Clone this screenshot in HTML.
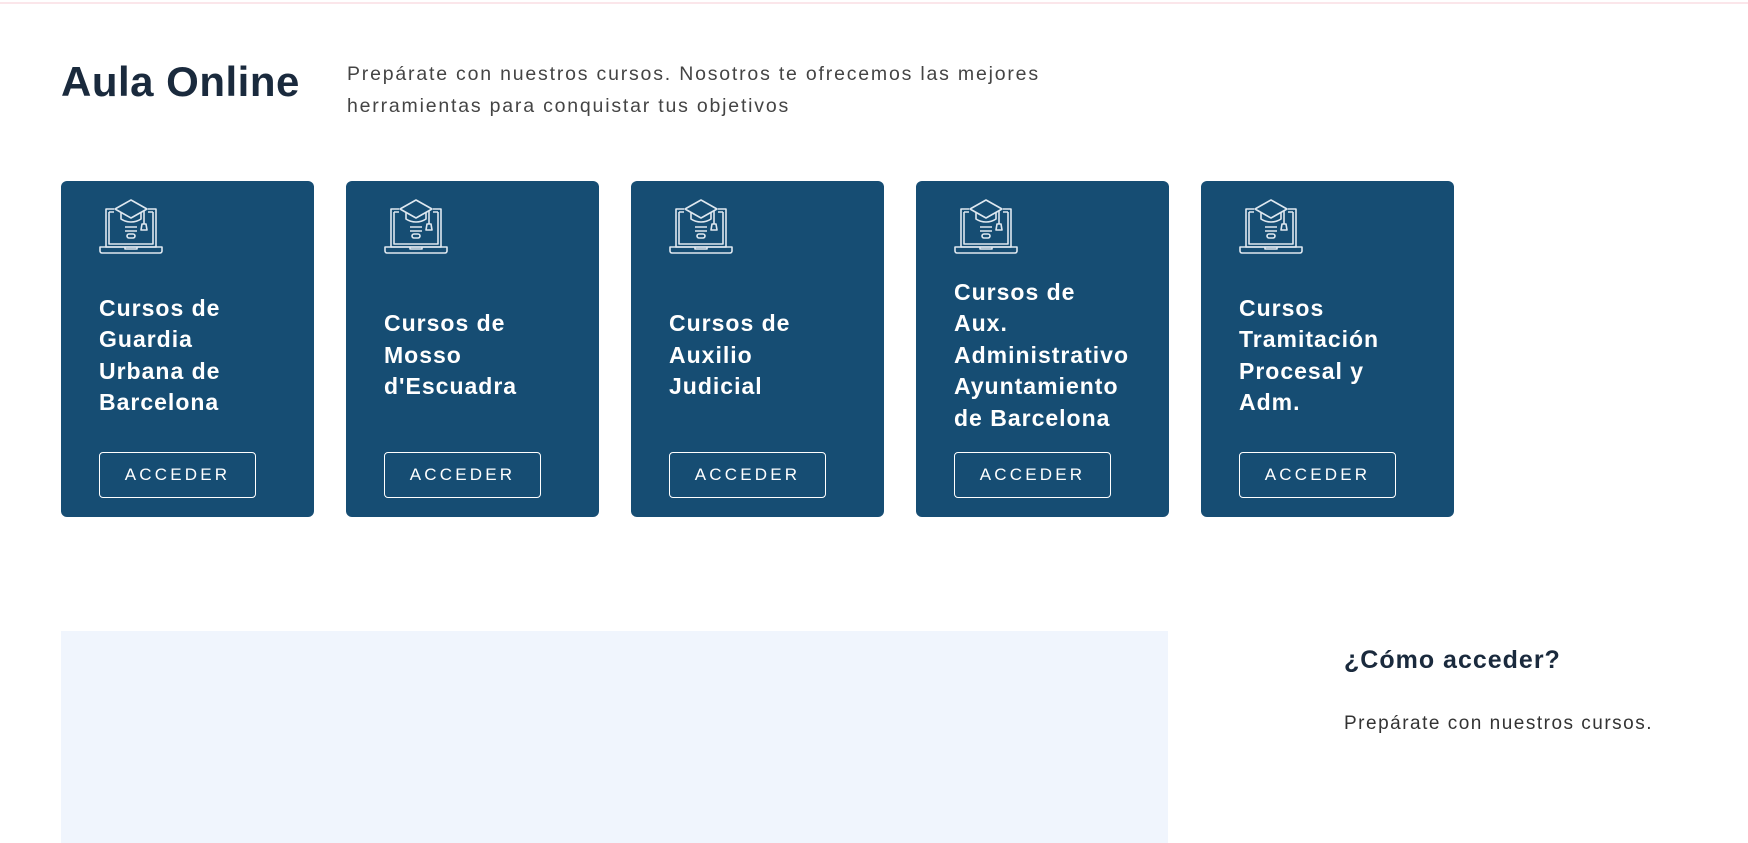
<!DOCTYPE html>
<html><head><meta charset="utf-8"><style>
*{box-sizing:border-box;margin:0;padding:0}
html,body{width:1748px;height:843px;overflow:hidden;background:#fff;font-family:"Liberation Sans",sans-serif}
.top{position:absolute;top:0;left:0;right:0;height:4px;border-bottom:2px solid #fbe6ea}
h1{position:absolute;left:61px;top:58px;font-size:42px;font-weight:bold;color:#1a2a3d;letter-spacing:.5px}
.intro{position:absolute;left:347px;top:58px;width:720px;font-size:19.5px;line-height:32px;color:#444;letter-spacing:1.8px}
.card{position:absolute;top:181px;width:253px;height:336px;background:#164d73;border-radius:6px;padding:0 38px;display:flex;flex-direction:column}
.card svg{margin-top:18px;flex:none}
.t{flex:1;display:flex;align-items:center;color:#fff;font-weight:bold;font-size:23px;line-height:31.5px;padding-top:4px;letter-spacing:1px;white-space:nowrap}
.btn{flex:none;margin-bottom:19px;width:157px;height:46px;border:1px solid #fff;border-radius:4px;color:#fff;font-size:17px;letter-spacing:3.2px;display:flex;align-items:center;justify-content:center}
.box{position:absolute;left:61px;top:631px;width:1107px;height:212px;background:#f0f5fd}
h2{position:absolute;left:1344px;top:646px;font-size:25px;color:#1a2a3d;letter-spacing:1px}
.p2{position:absolute;left:1344px;top:713px;font-size:19px;color:#333;letter-spacing:1.5px}
</style></head><body>
<div class="top"></div>
<h1>Aula Online</h1>
<div class="intro">Prepárate con nuestros cursos. Nosotros te ofrecemos las mejores<br>herramientas para conquistar tus objetivos</div>

<svg width="0" height="0" style="position:absolute"><defs><symbol id="ic" viewBox="0 0 64 56"><g fill="none" stroke="#dfe8f0" stroke-width="1.6" stroke-linejoin="round">
<path d="M15 10H7v38h50V10h-8"/><path d="M10 13h5M49 13h5"/><path d="M10 13v32h44V13"/><path d="M1 48h62v4a2 2 0 0 1-2 2H3a2 2 0 0 1-2-2z"/><path d="M26 48v2h12v-2"/>
<path d="M32 1L16 10l16 9 16-9z"/><path d="M22 13v7c6 4 14 4 20 0v-7"/><path d="M45 12v13"/><path d="M43 25h4l1 6h-6z"/>
<path d="M26 28h12M26 32h12"/><rect x="28" y="35" width="8" height="4" rx="2"/></g></symbol></defs></svg>

<div class="card" style="left:61px"><svg width="64" height="56"><use href="#ic"/></svg><div class="t">Cursos de<br>Guardia<br>Urbana de<br>Barcelona</div><div class="btn">ACCEDER</div></div>
<div class="card" style="left:346px"><svg width="64" height="56"><use href="#ic"/></svg><div class="t">Cursos de<br>Mosso<br>d'Escuadra</div><div class="btn">ACCEDER</div></div>
<div class="card" style="left:631px"><svg width="64" height="56"><use href="#ic"/></svg><div class="t">Cursos de<br>Auxilio<br>Judicial</div><div class="btn">ACCEDER</div></div>
<div class="card" style="left:916px"><svg width="64" height="56"><use href="#ic"/></svg><div class="t">Cursos de<br>Aux.<br>Administrativo<br>Ayuntamiento<br>de Barcelona</div><div class="btn">ACCEDER</div></div>
<div class="card" style="left:1201px"><svg width="64" height="56"><use href="#ic"/></svg><div class="t">Cursos<br>Tramitación<br>Procesal y<br>Adm.</div><div class="btn">ACCEDER</div></div>

<div class="box"></div>
<h2>¿Cómo acceder?</h2>
<div class="p2">Prepárate con nuestros cursos.</div>
</body></html>
